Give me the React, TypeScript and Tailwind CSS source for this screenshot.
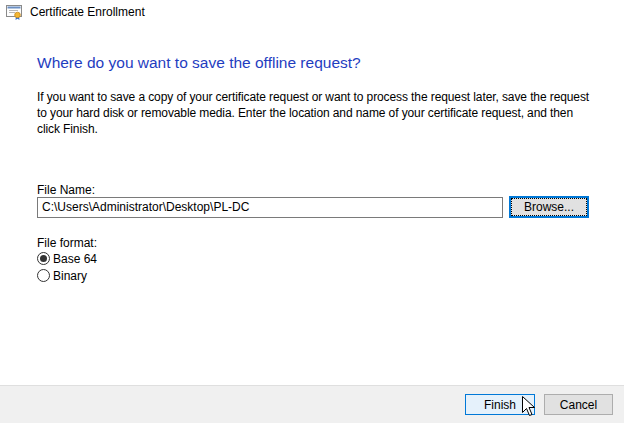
import React from 'react';

const font = { fontFamily: '"Liberation Sans", Arial, sans-serif' };

const CertIcon: React.FC = () => (
  <svg width="17" height="16" viewBox="0 0 17 16">
    <rect x="0.5" y="1.5" width="15" height="11" fill="#fdfdfd" stroke="#8a8a8a" />
    <rect x="1.5" y="2.5" width="13" height="2" fill="#6b8fc4" />
    <line x1="3" y1="6.5" x2="12" y2="6.5" stroke="#b7b7b7" />
    <line x1="3" y1="8.5" x2="9" y2="8.5" stroke="#b7b7b7" />
    <path d="M10 12 L9.5 16 L11.5 14.8 L13.5 16 L13 12 Z" fill="#2f6fd0" />
    <circle cx="11.5" cy="11" r="2.8" fill="#f2b632" stroke="#c9871a" strokeWidth="0.8" />
  </svg>
);

const Cursor: React.FC = () => (
  <svg width="14" height="22" viewBox="0 0 14 22" className="absolute left-[57px] top-[2px]">
    <path d="M0.5 0.5 L0.5 16.5 L4.5 12.5 L7.5 19.5 L10 18.5 L7 11.5 L12.5 11.5 Z" fill="#fff" stroke="#000" strokeWidth="1" />
  </svg>
);

const Radio: React.FC<{ checked?: boolean; label: string }> = ({ checked, label }) => (
  <label className="flex items-center h-[17px]">
    <span className="w-[13px] h-[13px] rounded-full border border-[#333] bg-white flex items-center justify-center mr-[3px]">
      {checked && <span className="w-[7px] h-[7px] rounded-full bg-[#333]" />}
    </span>
    <span>{label}</span>
  </label>
);

export default function App() {
  return (
    <div className="w-[624px] h-[423px] bg-white flex flex-col text-[12px] text-black overflow-hidden" style={font}>
      <div className="flex items-center h-[24px] pl-[6px] gap-[7px]">
        <CertIcon />
        <span className="text-[12px]">Certificate Enrollment</span>
      </div>

      <div className="flex-1 pl-[37px] pr-[20px]">
        <h1 className="mt-[28px] text-[15.5px] leading-[22px] text-[#1f3dbf]">Where do you want to save the offline request?</h1>

        <p className="mt-[15px] leading-[16px] whitespace-nowrap tracking-[-0.1px]">
          If you want to save a copy of your certificate request or want to process the request later, save the request
          <br />
          to your hard disk or removable media. Enter the location and name of your certificate request, and then
          <br />
          click Finish.
        </p>

        <div className="mt-[48px] leading-[11px]">File Name:</div>
        <div className="flex items-center">
          <div className="w-[466px] h-[21px] border border-[#7a7a7a] flex items-center pl-[4px]">
            C:\Users\Administrator\Desktop\PL-DC
          </div>
          <button className="ml-[6px] w-[80px] h-[22px] bg-[#e1e1e1] border-2 border-[#0078d7] flex items-center justify-center">
            <span className="w-full h-full border border-dotted border-black flex items-center justify-center">Browse...</span>
          </button>
        </div>

        <div className="mt-[19px] leading-[13px]">File format:</div>
        <Radio checked label="Base 64" />
        <Radio label="Binary" />
      </div>

      <div className="h-[38px] bg-[#f0f0f0] border-t border-[#dfdfdf] flex items-center justify-end pr-[11px] gap-[9px]">
        <div className="relative">
          <button className="w-[70px] h-[21px] bg-[#e5f1fb] border border-[#0078d7]">Finish</button>
          <Cursor />
        </div>
        <button className="w-[69px] h-[21px] bg-[#e1e1e1] border border-[#adadad]">Cancel</button>
      </div>
    </div>
  );
}
